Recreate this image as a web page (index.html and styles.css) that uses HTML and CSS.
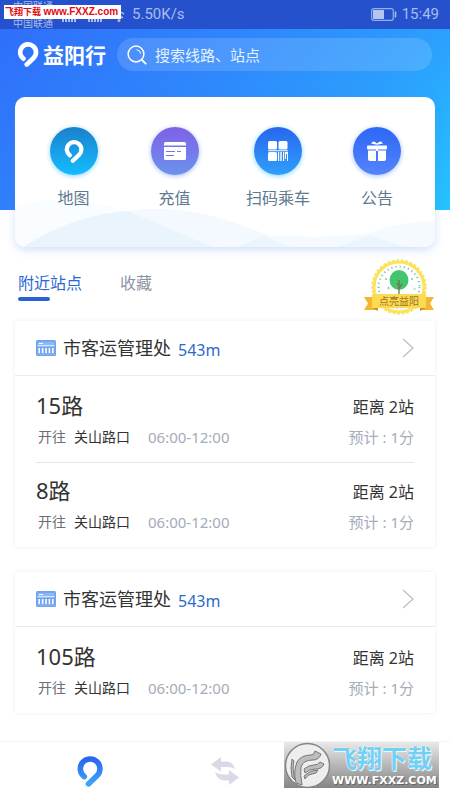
FILE: index.html
```html
<!DOCTYPE html>
<html lang="zh-CN">
<head>
<meta charset="utf-8">
<meta name="viewport" content="width=device-width, initial-scale=1">
<title>益阳行</title>
<link rel="stylesheet" href="styles.css">
</head>
<body>
<svg class="defs" aria-hidden="true">
  <defs>
    <linearGradient id="brand" x1="0" y1="0" x2="0" y2="1"><stop offset="0" stop-color="#2c66ee"/><stop offset="1" stop-color="#3fa2f8"/></linearGradient>
    <symbol id="logo" viewBox="0 0 25 30"><path d="M7 20A9.5 9.5 0 1 1 19.2 19.2L11 27" fill="none" stroke-width="5.6" stroke-linecap="round" stroke-linejoin="round"/></symbol>
    <symbol id="bus" viewBox="0 0 20 16">
      <rect width="20" height="16" rx="1.5" fill="#6fa3ef"/>
      <path d="M1.5 1.8h17v3.6h-17z" fill="#8db8f6"/><path d="M3 3.5h4M1.5 5.8h17" stroke="#fff"/>
      <path d="M3.2 8v5M6.6 8v5M10 8v5M13.4 8v5M16.8 8v5" stroke="#fff" stroke-width="1.6"/><path d="M1 14h18" stroke="#a5c7f8" stroke-width=".7"/>
    </symbol>
    <symbol id="chevron" viewBox="0 0 12 20"><path d="M1 1l10 9-10 9" fill="none" stroke="#b9bdc5" stroke-width="1.2"/></symbol>
  </defs>
</svg>

<header class="hero">
  <div class="status">
    <div class="carrier"><span>中国联通</span><span>中国联通</span></div>
    <svg class="signal" width="62" height="14" viewBox="0 0 62 14"><path d="M1 11v3M4 10v4M7 9v5M10 7v7M13 5v9M27 11v3M30 10v4M33 9v5M36 7v7M39 5v9" stroke="#a9bcee" stroke-width="2"/><path d="M51 7q6-6 12 0M53 10q4-4 8 0" fill="none" stroke="#a9bcee" stroke-width="1.5"/><circle cx="57" cy="12.5" r="1.5" fill="#a9bcee"/></svg>
    <span class="speed">5.50K/s</span>
    <svg class="battery" width="26" height="13" viewBox="0 0 26 13"><rect x=".7" y=".7" width="21.6" height="11.6" rx="2" fill="none" stroke="#96aeea" stroke-width="1.2"/><path d="M2 2h11v9H2z" fill="#b5c5f1"/><path d="M24.5 3.5v6" stroke="#a9bcee" stroke-width="1.6"/></svg>
    <time>15:49</time>
    <p class="stamp">飞翔下载 <b>www.FXXZ.com</b></p>
  </div>
  <div class="topbar">
    <svg class="logo" width="22" height="25"><use href="#logo"/></svg>
    <h1>益阳行</h1>
    <label class="search">
      <svg width="20" height="20" viewBox="0 0 20 20" fill="none" stroke="#fff" stroke-linecap="round"><circle cx="9" cy="9" r="7.9" stroke-width="1.5"/><path d="M15 15l3.7 3.7" stroke-width="1.8"/><path d="M10 4.7q3.3.5 3.7 3.7"/></svg>
      <input type="search" placeholder="搜索线路、站点" aria-label="搜索线路、站点">
    </label>
  </div>
</header>

<main>
  <nav class="quick">
    <svg class="hills" viewBox="0 0 420 60" preserveAspectRatio="none" aria-hidden="true">
      <path d="M0 19Q50 5 113 24L205 60H0z" fill="#f9fdff"/>
      <path d="M113 24Q165 16 225 38Q258 49 282 60H198Q155 42 113 24z" fill="#f3f9fe"/>
      <path d="M8 60Q60 27 113 24Q155 42 198 60z" fill="#e9f4fd"/>
      <path d="M198 60Q235 46 300 50L350 47Q385 34 420 34V60z" fill="#f5fafe"/>
      <path d="M222 60L248 49L274 60zM322 60L355 48L390 60z" fill="#ebf5fd"/>
    </svg>
    <a href="#"><span class="disc map"><svg width="20" height="23"><use href="#logo"/></svg></span>地图</a>
    <a href="#"><span class="disc pay"><svg width="22" height="18" viewBox="0 0 22 18"><path d="M0 1.5Q0 0 1.500 0h19Q22 0 22 1.500V3.500H0zM0 5h22v11.500Q22 18 20.500 18h-19Q0 18 0 16.500z" fill="#fff"/><path d="M2 9.500h9M13 9.500h4M2 13.500h8" stroke="#7973e8" stroke-width="1.200"/></svg></span>充值</a>
    <a href="#"><span class="disc scan"><svg width="20" height="20" viewBox="0 0 20 20" fill="#fff"><rect width="9" height="8.500" rx="1.500"/><rect x="10.500" width="9" height="8.500" rx="1.500"/><rect y="11" width="9" height="9" rx="1.500"/><path d="M0 9.300h20v1H0zM10 11h1.200v9H10zM12.300 11h1.500v9h-1.500zM15 11h1.200v9H15zM17 11h3v9h-1v-7h-1v5h-1z"/></svg></span>扫码乘车</a>
    <a href="#"><span class="disc gift"><svg width="22" height="20" viewBox="0 0 22 20" fill="#fff"><path d="M11 3.800L5 2.500L7 .5Q9 .5 11 2.500Q13 .5 15 .5L17 2.500z"/><rect x="1" y="4.500" width="20" height="4" rx="1"/><path d="M2 9.500h8V20H4Q2 20 2 18zM12 9.500h8V18Q20 20 18 20h-6zM10 7h2v3h-2z"/></svg></span>公告</a>
  </nav>

  <div class="tabs">
    <a class="active" href="#">附近站点</a>
    <a href="#">收藏</a>
    <a class="badge" href="#">
      <svg width="72" height="58" viewBox="0 0 72 58" aria-hidden="true">
        <path d="M1 39h14v13H1l4-6.500zM71 39H57v13h14l-4-6.500z" fill="#f6b52f"/>
        <circle cx="36" cy="29" r="25" fill="#fff" stroke="#fbe35c" stroke-width="3"/>
        <circle cx="36" cy="29" r="26.500" fill="none" stroke="#fbe35c" stroke-width="2.500" stroke-dasharray="2.500 2"/>
        <circle cx="36" cy="29" r="20.500" fill="none" stroke="#7cc79c" stroke-width="2" stroke-dasharray="1.200 3"/>
        <path d="M22 20l2 2m0-2l-2 2M48 20l2 2m0-2l-2 2M24 30h3m-1.500-1.500v3M50 31h3" stroke="#8bcba6" stroke-width=".8"/>
        <ellipse cx="36" cy="22" rx="9.500" ry="10" fill="#43c56c"/><path d="M36 22v16M36 30l3-4M36 28l-2-3" stroke="#78705a" stroke-width="1.300" fill="none"/>
        <path d="M9 36h54v14H9z" fill="#fbda55"/><path d="M9 50l6 3v-3zM63 50l-6 3v-3z" fill="#d98e1e"/>
      </svg>
      <span>点亮益阳</span>
    </a>
  </div>

  <section class="stop">
    <a class="stop-head" href="#"><svg width="20" height="16"><use href="#bus"/></svg><h2>市客运管理处</h2><span class="meters">543m</span><svg class="go" width="12" height="20"><use href="#chevron"/></svg></a>
    <ul>
      <li><div class="line"><h3>15路</h3><span class="away">距离 2站</span></div><div class="line info"><span class="to">开往</span><span class="dest">关山路口</span><span>06:00-12:00</span><span class="eta">预计 : 1分</span></div></li>
      <li><div class="line"><h3>8路</h3><span class="away">距离 2站</span></div><div class="line info"><span class="to">开往</span><span class="dest">关山路口</span><span>06:00-12:00</span><span class="eta">预计 : 1分</span></div></li>
    </ul>
  </section>
  <section class="stop">
    <a class="stop-head" href="#"><svg width="20" height="16"><use href="#bus"/></svg><h2>市客运管理处</h2><span class="meters">543m</span><svg class="go" width="12" height="20"><use href="#chevron"/></svg></a>
    <ul>
      <li><div class="line"><h3>105路</h3><span class="away">距离 2站</span></div><div class="line info"><span class="to">开往</span><span class="dest">关山路口</span><span>06:00-12:00</span><span class="eta">预计 : 1分</span></div></li>
    </ul>
  </section>
</main>

<footer class="tabbar">
  <a href="#" aria-label="首页"><svg width="26" height="31" viewBox="0 0 25 30"><path d="M7 20A9.500 9.500 0 1 1 19.200 19.200L11 27" fill="none" stroke="url(#brand)" stroke-width="5.400" stroke-linecap="round" stroke-linejoin="round"/></svg></a>
  <a href="#" aria-label="换乘"><svg width="28" height="28" viewBox="0 0 28 28" fill="#d9dae5"><path d="M0 7.500L10 0v4.500h6Q22 5 24 12q-3-2-8-2h-6v4.500zM28 20.500L18 13v4.500h-5Q7 17.500 4 15q2 8 9 8.500h5V28z"/></svg></a>
  <a href="#" aria-label="我的"></a>
  <div class="mark">
    <svg width="47" height="47" viewBox="0 0 47 47" aria-hidden="true"><circle cx="23.500" cy="23.500" r="22" fill="#eee" stroke="#858585" stroke-width="1.500"/><g fill="#bdbdbd" stroke="#777" stroke-width="1" stroke-linejoin="round"><path d="M12 41Q9 30 13 20Q17 13 27 13Q30 13 31 9L37 12Q35 18 29 18Q19 18 17 25Q16 33 18 43z"/><path d="M20 27Q25 23 30 23Q34 23 36 20L40 22Q38 27 32 27Q25 27 21 31zM20 34Q26 28 34 28Q33 32 28 32Q24 32 21 37z"/><path d="M8 35Q6 26 8 17L10 19Q8 27 11 38z"/></g></svg>
    <p><strong>飞翔下载</strong><small>WWW.FXXZ.COM</small></p>
  </div>
</footer>
</body>
</html>
```
FILE: styles.css
```css
* { box-sizing: border-box; }
body {
  margin: 0;
  min-height: 100vh;
  display: flex;
  flex-direction: column;
  background: #fff;
  color: #333;
  font: 16px/24px "Noto Sans", "Noto Sans CJK SC", sans-serif;
}
h1, h2, h3, p, ul { margin: 0; padding: 0; font-weight: 400; }
ul { list-style: none; }
a { color: inherit; text-decoration: none; }
svg { display: block; flex: none; }
.defs { position: absolute; width: 0; height: 0; }

.hero {
  height: 210px;
  background: linear-gradient(135deg, #2f6cfb 0%, #2f85fc 40%, #2c9dfd 70%, #24c4ff 100%);
}
.status {
  position: relative;
  display: flex;
  align-items: center;
  height: 29px;
  padding: 0 11px 0 13px;
  background: #2552cc;
  color: #a9bcee;
  font: 15px/29px Roboto, "Noto Sans CJK SC", sans-serif;
  overflow: hidden;
}
.carrier { display: grid; font-size: 10px; line-height: 17px; width: 49px; }
.speed { margin-left: 8px; }
.battery { margin: 0 5px 0 auto; }
.stamp {
  position: absolute;
  left: 4px;
  top: 5px;
  width: 117px;
  height: 14px;
  padding-left: 1px;
  background: #fff;
  color: #e00a12;
  font: bold 9px/14px "Liberation Sans", "Noto Sans CJK SC", sans-serif;
  white-space: nowrap;
}
.stamp b { font-size: 10px; }
.topbar { display: flex; align-items: center; padding: 9px 18px 0 17px; color: #fff; }
.logo, .disc { stroke: #fff; }
.topbar h1 { margin: 0 11px 0 4px; font-size: 21px; line-height: 24px; font-weight: 700; }
.search {
  flex: 1;
  min-width: 0;
  display: flex;
  align-items: center;
  gap: 8px;
  height: 33px;
  padding: 0 10px;
  border-radius: 17px;
  background: rgba(255, 255, 255, .14);
}
.search input {
  flex: 1;
  min-width: 0;
  padding: 0;
  border: 0;
  outline: 0;
  background: none;
  color: #fff;
  font: inherit;
  font-size: 15px;
}
.search input::placeholder { color: #e6f2ff; opacity: 1; }

main { flex: 1; padding: 0 15px; }
.quick {
  position: relative;
  display: grid;
  grid-template-columns: 101fr 101fr 106fr 92fr;
  height: 150px;
  margin-top: -113px;
  padding: 30px 12px 0 8px;
  border-radius: 10px;
  background: #fff;
  box-shadow: 0 3px 8px rgba(80, 130, 235, .25);
  overflow: hidden;
  color: #60798f;
}
.hills { position: absolute; left: 0; bottom: 0; width: 100%; height: 60px; }
.quick a { position: relative; display: flex; flex-direction: column; align-items: center; gap: 11px; }
.disc { display: grid; place-items: center; width: 48px; height: 48px; border-radius: 50%; }
.disc:not(.map) { stroke: none; }
.map { background: linear-gradient(#1c80cc, #12bdff); box-shadow: 0 1px 5px #8fcdfb; }
.pay { background: linear-gradient(#8060e6, #6a93ee); box-shadow: 0 1px 5px #a6bdf5; }
.scan { background: linear-gradient(#2867ee, #2f9ffa); box-shadow: 0 1px 5px #7fd6fd; }
.gift { background: linear-gradient(#2c67f6, #5583fb); box-shadow: 0 1px 5px #a6bdfb; }

.tabs { position: relative; display: flex; gap: 38px; height: 74px; padding: 24px 3px 0; color: #8d93a2; }
.tabs .active { align-self: flex-start; color: #2a68d4; }
.active::after { content: ""; display: block; width: 32px; height: 4px; margin-top: 2px; border-radius: 2px; background: #2a62d5; }
.tabs .badge { position: absolute; right: 0; top: 11px; }
.badge span { position: absolute; inset: 37px 0 auto; text-align: center; font-size: 10px; line-height: 12px; color: #9c7420; }

.stop { margin-bottom: 25px; background: #fff; box-shadow: 0 0 4px rgba(60, 90, 160, .1); }
.stop-head { display: flex; align-items: center; height: 55px; padding: 0 21px; border-bottom: 1px solid #e9ebef; }
.stop-head h2 { margin: 0 7px; font-size: 18px; line-height: 24px; }
.meters { color: #2a6bcb; padding-top: 3px; }
.go { margin-left: auto; }
.stop ul { padding: 2px 21px 0; }
.stop li { padding: 11px 0; }
.stop li + li { border-top: 1px solid #e5e7eb; }
.line { display: flex; align-items: center; justify-content: space-between; line-height: 32px; }
.line h3 { font-size: 22px; line-height: 32px; }
.away { padding-top: 4px; font-size: 16px; line-height: 28px; }
.info { justify-content: flex-start; margin-top: 2px; padding-left: 2px; line-height: 28px; font-size: 15px; color: #a5acb9; }
.to, .dest { font-size: 14px; }
.to { color: #6b6e74; margin-right: 8px; }
.dest { color: #333; margin-right: 18px; }
.eta { margin-left: auto; }

.tabbar {
  position: relative;
  display: grid;
  grid-template-columns: 180fr 90fr 180fr;
  place-items: center;
  height: 59px;
  border-top: 1px solid #f3f4f6;
}
.mark {
  position: absolute;
  right: 11px;
  top: 0;
  display: flex;
  width: 155px;
  height: 46px;
  background: linear-gradient(#e9e9e9, #858585);
}
.mark p { flex: 1; display: flex; flex-direction: column; align-items: flex-start; padding-left: 1px; }
.mark strong { font-size: 25px; line-height: 32px; color: #72d0f4; text-shadow: 0 0 2px #fff, 1px 1px 0 #eaf8ff; }
.mark small { font: bold 11px/13px "DejaVu Sans", sans-serif; color: #fff; text-shadow: 1px 1px 0 #666; }
```
